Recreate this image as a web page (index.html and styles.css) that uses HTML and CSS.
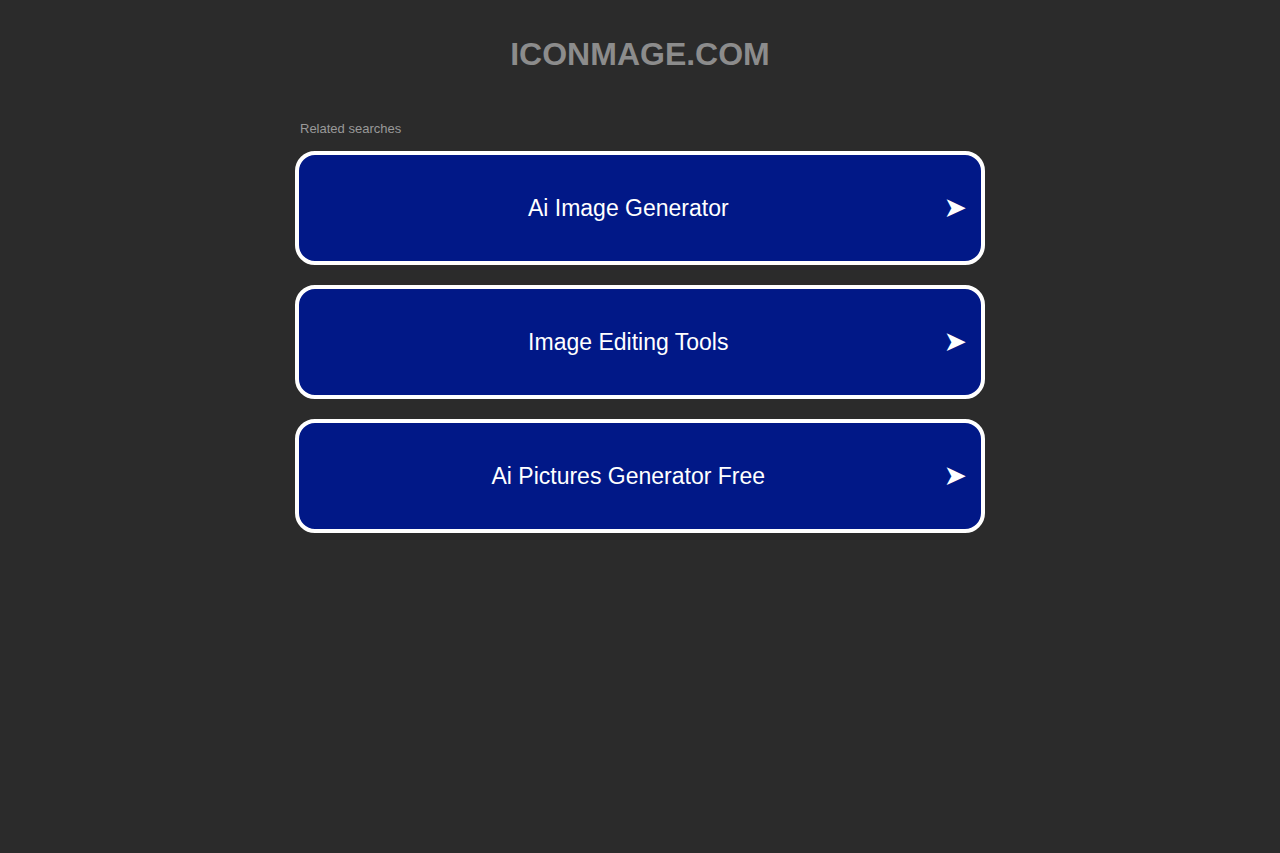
FILE: index.html
```html
<!DOCTYPE html>
<html>
<head>
<meta charset="utf-8">
<link rel="stylesheet" href="styles.css">
</head>
<body>
<div class="page">
  <h1 class="domain">ICONMAGE.COM</h1>
  <div class="related">
    <div class="label">Related searches</div>
    <div class="list">
      <a class="item" href="#"><span class="text">Ai Image Generator</span><span class="arrow">➤</span></a>
      <a class="item" href="#"><span class="text">Image Editing Tools</span><span class="arrow">➤</span></a>
      <a class="item" href="#"><span class="text">Ai Pictures Generator Free</span><span class="arrow">➤</span></a>
    </div>
  </div>
</div>
</body>
</html>
```
FILE: styles.css
```css
html, body {
  margin: 0;
  padding: 0;
  background: #2b2b2b;
  font-family: "Liberation Sans", Arial, sans-serif;
}
.page {
  width: 690px;
  margin: 0 auto;
  padding-top: 35px;
}
.domain {
  margin: 0;
  text-align: center;
  font-size: 32px;
  font-weight: bold;
  color: #8c8c8c;
  line-height: 38px;
}
.related {
  margin-top: 48px;
}
.label {
  font-size: 13px;
  color: #999999;
  padding-left: 5px;
  line-height: 16px;
  margin-bottom: 14px;
}
.list {
  display: flex;
  flex-direction: column;
  gap: 20px;
}
.item {
  display: flex;
  align-items: center;
  height: 106px;
  border: 4px solid #ffffff;
  border-radius: 20px;
  background: #011887;
  color: #ffffff;
  text-decoration: none;
  padding: 0 14px 0 14px;
}
.text {
  flex: 1;
  text-align: center;
  font-size: 23px;
}
.arrow {
  font-size: 28px;
  line-height: 28px;
  font-family: "DejaVu Sans", sans-serif;
}
```
